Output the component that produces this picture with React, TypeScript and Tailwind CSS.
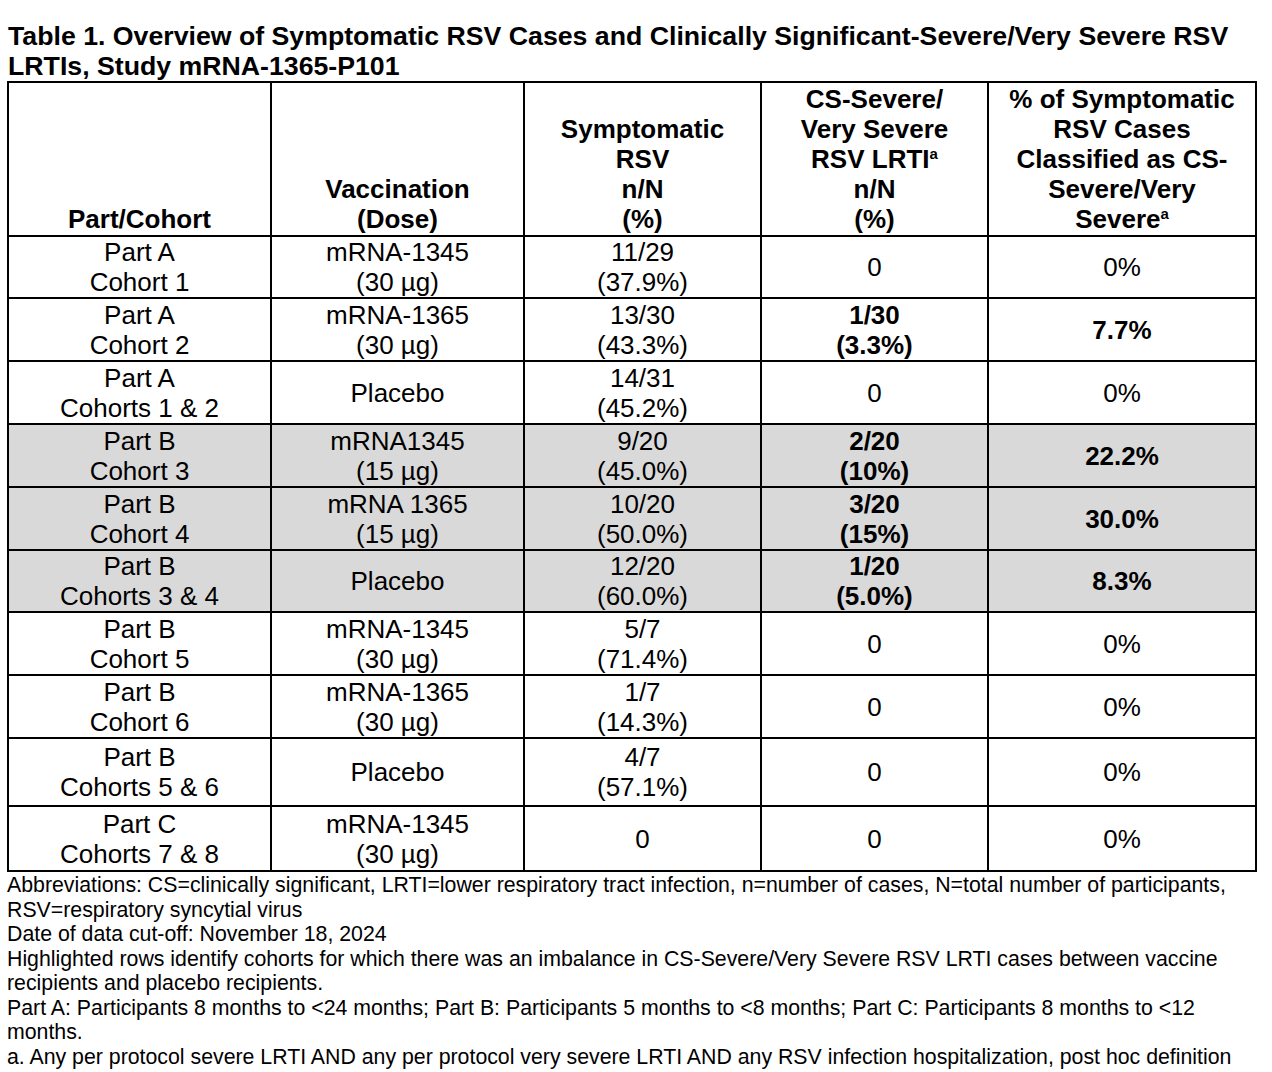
import React from 'react';

type Row = {
  part: string;
  cohort: string;
  vax: string[];
  sym: string[];
  cs: string[];
  pct: string;
  bold?: boolean;
  gray?: boolean;
  h: string;
};

const rows: Row[] = [
  { part: 'Part A', cohort: 'Cohort 1', vax: ['mRNA-1345', '(30 µg)'], sym: ['11/29', '(37.9%)'], cs: ['0'], pct: '0%', h: 'h-[62px]' },
  { part: 'Part A', cohort: 'Cohort 2', vax: ['mRNA-1365', '(30 µg)'], sym: ['13/30', '(43.3%)'], cs: ['1/30', '(3.3%)'], pct: '7.7%', bold: true, h: 'h-[63px]' },
  { part: 'Part A', cohort: 'Cohorts 1 & 2', vax: ['Placebo'], sym: ['14/31', '(45.2%)'], cs: ['0'], pct: '0%', h: 'h-[63px]' },
  { part: 'Part B', cohort: 'Cohort 3', vax: ['mRNA1345', '(15 µg)'], sym: ['9/20', '(45.0%)'], cs: ['2/20', '(10%)'], pct: '22.2%', bold: true, gray: true, h: 'h-[63px]' },
  { part: 'Part B', cohort: 'Cohort 4', vax: ['mRNA 1365', '(15 µg)'], sym: ['10/20', '(50.0%)'], cs: ['3/20', '(15%)'], pct: '30.0%', bold: true, gray: true, h: 'h-[63px]' },
  { part: 'Part B', cohort: 'Cohorts 3 & 4', vax: ['Placebo'], sym: ['12/20', '(60.0%)'], cs: ['1/20', '(5.0%)'], pct: '8.3%', bold: true, gray: true, h: 'h-[62px]' },
  { part: 'Part B', cohort: 'Cohort 5', vax: ['mRNA-1345', '(30 µg)'], sym: ['5/7', '(71.4%)'], cs: ['0'], pct: '0%', h: 'h-[63px]' },
  { part: 'Part B', cohort: 'Cohort 6', vax: ['mRNA-1365', '(30 µg)'], sym: ['1/7', '(14.3%)'], cs: ['0'], pct: '0%', h: 'h-[63px]' },
  { part: 'Part B', cohort: 'Cohorts 5 & 6', vax: ['Placebo'], sym: ['4/7', '(57.1%)'], cs: ['0'], pct: '0%', h: 'h-[68px]' },
  { part: 'Part C', cohort: 'Cohorts 7 & 8', vax: ['mRNA-1345', '(30 µg)'], sym: ['0'], cs: ['0'], pct: '0%', h: 'h-[65px]' },
];

const Lines: React.FC<{ items: string[] }> = ({ items }) => (
  <>
    {items.map((t, i) => (
      <div key={i}>{t}</div>
    ))}
  </>
);

const Sup: React.FC = () => (
  <span className="relative -top-[9px] text-[15px] leading-none">a</span>
);

const th = 'border-2 border-black align-bottom text-center font-bold leading-[30px] pb-[1px] px-1';
const td = 'border-2 border-black align-middle text-center leading-[30px] px-1';

export default function App() {
  return (
    <div className="min-h-screen bg-white text-black pt-[21px] pb-4" style={{ fontFamily: '"Liberation Sans", Arial, sans-serif' }}>
      <h1 className="pl-[8px] text-[26.7px] font-bold leading-[30px] whitespace-nowrap">
        Table 1. Overview of Symptomatic RSV Cases and Clinically Significant-Severe/Very Severe RSV
        <br />
        LRTIs, Study mRNA-1365-P101
      </h1>
      <table className="ml-[7px] mt-[0px] w-[1248px] table-fixed border-collapse text-[26px]">
        <colgroup>
          <col className="w-[263px]" />
          <col className="w-[253px]" />
          <col className="w-[237px]" />
          <col className="w-[227px]" />
          <col className="w-[268px]" />
        </colgroup>
        <thead>
          <tr className="h-[154px]">
            <th className={th}>Part/Cohort</th>
            <th className={th}>
              Vaccination
              <br />
              (Dose)
            </th>
            <th className={th}>
              Symptomatic
              <br />
              RSV
              <br />
              n/N
              <br />
              (%)
            </th>
            <th className={th}>
              CS-Severe/
              <br />
              Very Severe
              <br />
              RSV LRTI<Sup />
              <br />
              n/N
              <br />
              (%)
            </th>
            <th className={th}>
              % of Symptomatic
              <br />
              RSV Cases
              <br />
              Classified as CS-
              <br />
              Severe/Very
              <br />
              Severe<Sup />
            </th>
          </tr>
        </thead>
        <tbody>
          {rows.map((r, i) => (
            <tr key={i} className={`${r.h} ${r.gray ? 'bg-[#d9d9d9]' : 'bg-white'}`}>
              <td className={td}>
                <Lines items={[r.part, r.cohort]} />
              </td>
              <td className={td}>
                <Lines items={r.vax} />
              </td>
              <td className={td}>
                <Lines items={r.sym} />
              </td>
              <td className={`${td} ${r.bold ? 'font-bold' : ''}`}>
                <Lines items={r.cs} />
              </td>
              <td className={`${td} ${r.bold ? 'font-bold' : ''}`}>{r.pct}</td>
            </tr>
          ))}
        </tbody>
      </table>
      <div className="pl-[7px] pt-[1px] text-[21.3px] leading-[24.5px] whitespace-nowrap">
        <p>
          Abbreviations: CS=clinically significant, LRTI=lower respiratory tract infection, n=number of cases, N=total number of participants,
          <br />
          RSV=respiratory syncytial virus
        </p>
        <p>Date of data cut-off: November 18, 2024</p>
        <p>
          Highlighted rows identify cohorts for which there was an imbalance in CS-Severe/Very Severe RSV LRTI cases between vaccine
          <br />
          recipients and placebo recipients.
        </p>
        <p>
          Part A: Participants 8 months to &lt;24 months; Part B: Participants 5 months to &lt;8 months; Part C: Participants 8 months to &lt;12
          <br />
          months.
        </p>
        <p>a. Any per protocol severe LRTI AND any per protocol very severe LRTI AND any RSV infection hospitalization, post hoc definition</p>
      </div>
    </div>
  );
}
